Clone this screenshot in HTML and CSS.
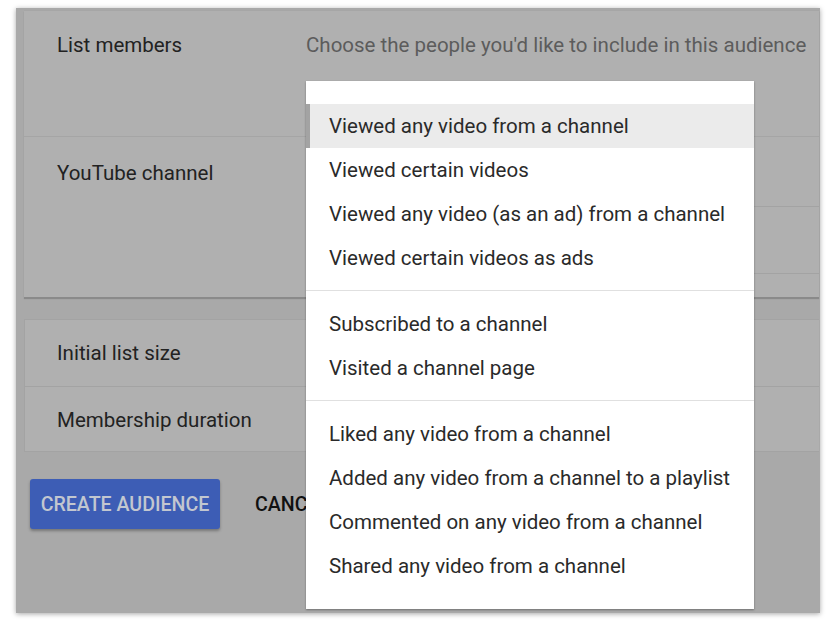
FILE: index.html
```html
<!DOCTYPE html>
<html>
<head>
<meta charset="utf-8">
<link rel="stylesheet" href="styles.css">
</head>
<body>
<div class="page">
  <div class="panel">
    <div class="card card-main">
      <div class="row row-members">
        <div class="label">List members</div>
        <div class="hint">Choose the people you'd like to include in this audience</div>
      </div>
      <div class="row row-channel">
        <div class="label">YouTube channel</div>
        <div class="field"><div class="field-box"></div></div>
      </div>
    </div>
    <div class="card card-settings">
      <div class="srow"><div class="label">Initial list size</div></div>
      <div class="srow"><div class="label">Membership duration</div></div>
    </div>
    <div class="actions">
      <button class="btn-primary">CREATE AUDIENCE</button>
      <button class="btn-text">CANCEL</button>
    </div>
  </div>
  <div class="menu">
    <div class="group">
      <div class="item active">Viewed any video from a channel</div>
      <div class="item">Viewed certain videos</div>
      <div class="item">Viewed any video (as an ad) from a channel</div>
      <div class="item">Viewed certain videos as ads</div>
    </div>
    <div class="group">
      <div class="item">Subscribed to a channel</div>
      <div class="item">Visited a channel page</div>
    </div>
    <div class="group">
      <div class="item">Liked any video from a channel</div>
      <div class="item">Added any video from a channel to a playlist</div>
      <div class="item">Commented on any video from a channel</div>
      <div class="item">Shared any video from a channel</div>
    </div>
  </div>
</div>
</body>
</html>
```

FILE: styles.css
```css
* { box-sizing: border-box; }
html, body {
  margin: 0;
  padding: 0;
  background: #ffffff;
  font-family: Roboto, "Liberation Sans", sans-serif;
}
.page {
  position: relative;
  width: 835px;
  height: 625px;
  padding: 8px 15px 0 16px;
}
.panel {
  height: 605px;
  background: #a9a9a9;
  box-shadow: 0 1px 5px rgba(0,0,0,0.35);
  display: flex;
  flex-direction: column;
  padding: 2px 1px 0 8px;
}
.card {
  background: #b0b0b0;
}
.card-main {
  height: 287px;
  border-top: 1px solid #a6a6a6;
  box-shadow: 0 2px 1px rgba(0,0,0,0.18);
}
.row {
  display: flex;
  padding-left: 33px;
}
.row-members {
  height: 126px;
  padding-top: 22px;
  border-bottom: 1px solid #a5a5a5;
}
.row-channel {
  height: 160px;
  padding-top: 24px;
}
.label {
  width: 249px;
  flex: none;
  font-size: 20.5px;
  line-height: 24px;
  color: #222222;
}
.hint {
  font-size: 20.5px;
  line-height: 24px;
  color: #5c5c5c;
  white-space: nowrap;
}
.field {
  flex: 1;
  padding-top: 45px;
}
.field-box {
  height: 68px;
  border-top: 1px solid #a3a3a3;
  border-bottom: 1px solid #a3a3a3;
}
.card-settings {
  margin-top: 22px;
  height: 133px;
  border: 1px solid #a3a3a3;
  border-right: none;
}
.srow {
  height: 66px;
  display: flex;
  align-items: center;
  padding-left: 32px;
}
.srow + .srow {
  border-top: 1px solid #a3a3a3;
}
.actions {
  display: flex;
  align-items: center;
  margin-top: 27px;
  padding-left: 6px;
  gap: 35px;
}
.btn-primary {
  width: 190px;
  height: 50px;
  border: none;
  border-radius: 3px;
  background: #3d5db5;
  color: #c2c7d0;
  font-family: Roboto, "Liberation Sans", sans-serif;
  font-weight: 500;
  font-size: 19.6px;
  padding: 0;
  box-shadow: 0 2px 3px rgba(0,0,0,0.3);
}
.btn-text {
  border: none;
  background: transparent;
  padding: 0;
  color: #111111;
  font-family: Roboto, "Liberation Sans", sans-serif;
  font-weight: 500;
  font-size: 19.6px;
}
.menu {
  position: absolute;
  left: 306px;
  top: 81px;
  width: 448px;
  height: 528px;
  background: #ffffff;
  box-shadow: 0 1px 2px rgba(0,0,0,0.35);
  padding: 23px 0 0 0;
}
.group {
  padding: 0 0 10px 0;
}
.group + .group {
  border-top: 1px solid #e0e0e0;
  padding-top: 11px;
}
.item {
  height: 44px;
  display: flex;
  align-items: center;
  padding-left: 23px;
  font-size: 20.5px;
  color: #2a2a2a;
  white-space: nowrap;
}
.item.active {
  background: #ebebeb;
  border-left: 4px solid #a3a3a3;
  padding-left: 19px;
}
```
